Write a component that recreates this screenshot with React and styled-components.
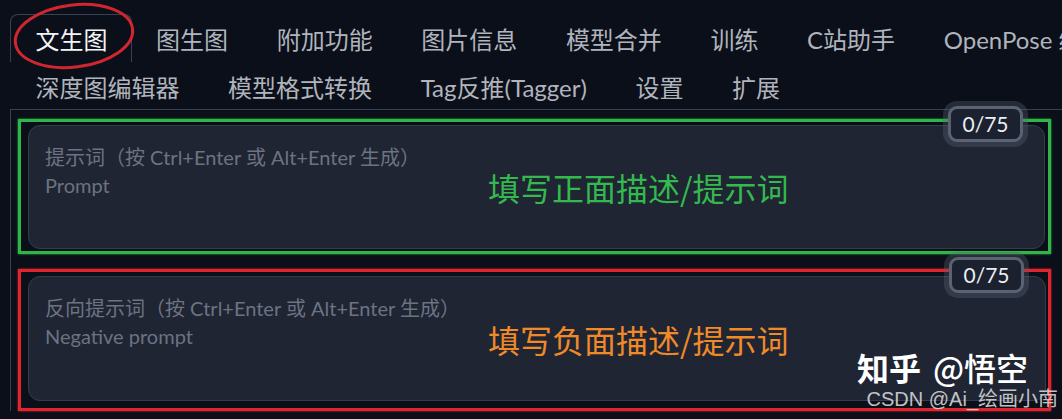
import React from 'react'
import styled, { createGlobalStyle } from 'styled-components'

const GlobalStyle = createGlobalStyle`
  html, body {
    margin: 0;
    padding: 0;
    background: #0b0f19;
    overflow: hidden;
  }
  body {
    font-family: Lato, "Noto Sans CJK SC", sans-serif;
  }
`;

const Page = styled.div`
  position: relative;
  width: 1062px;
  height: 419px;
  padding: 14px 0 0 10px;
  box-sizing: border-box;
  overflow: hidden;
`;

const TabRow = styled.div`
  display: flex;
  flex-wrap: nowrap;
  height: 48px;
  white-space: nowrap;
`;

const Tab = styled.div`
  display: flex;
  align-items: center;
  height: 100%;
  padding: 0 23.3px;
  box-sizing: border-box;
  font-size: 24px;
  color: ${p => (p.$active ? '#f3f4f6' : '#b0b4bc')};
  border: 1px solid ${p => (p.$active ? '#374151' : 'transparent')};
  border-bottom: none;
  border-radius: 8px 8px 0 0;
  flex-shrink: 0;
  &:first-child { padding-left: 24.5px; }
`;

const Panel = styled.div`
  border-top: 1px solid #374151;
  border-left: 1px solid #374151;
  margin-top: -1px;
  padding: 9px 0 0 7px;
  display: flex;
  flex-direction: column;
  gap: 15px;
`;

const Frame = styled.div`
  width: 1033px;
  box-sizing: border-box;
  border: 3px solid ${p => p.$color};
  padding: ${p => p.$pad};
  box-shadow: 0 0 2px ${p => p.$color};
`;

const TextBox = styled.div`
  position: relative;
  height: ${p => p.$h}px;
  box-sizing: border-box;
  background: #1f2533;
  border: 1px solid #343c4b;
  border-radius: 12px;
  padding: 17px 16px;
  font-size: 20px;
  line-height: 28px;
  color: #6c7382;
`;

const Counter = styled.div`
  position: absolute;
  top: -20px;
  right: 21px;
  width: 75px;
  height: 36px;
  box-sizing: border-box;
  border: 3px solid #5b6271;
  border-radius: 9px;
  background: #1b212e;
  box-shadow: 0 0 0 5px rgba(90, 98, 114, 0.35);
  display: flex;
  align-items: center;
  justify-content: center;
  font-size: 21px;
  color: #eceef2;
`;

const Note = styled.div`
  position: absolute;
  left: 459px;
  top: 50%;
  transform: translateY(-50%);
  font-size: 32px;
  font-family: "Noto Sans CJK SC", Lato, sans-serif;
  color: ${p => p.$color};
  white-space: nowrap;
`;

const Ring = styled.svg`
  position: absolute;
  left: 0;
  top: 0;
  pointer-events: none;
`;

const Mark = styled.div`
  position: absolute;
  right: 4px;
  bottom: 8px;
  display: flex;
  flex-direction: column;
  align-items: flex-end;
  pointer-events: none;
`;

const MarkMain = styled.div`
  font-family: "Noto Sans CJK SC", sans-serif;
  font-size: 32px;
  color: #ffffff;
  line-height: 40px;
  margin-right: 30px;
  b { font-weight: 700; }
  span { font-weight: 500; margin-left: 12px; }
`;

const MarkSub = styled.div`
  font-family: "Liberation Sans", "Noto Sans CJK SC", sans-serif;
  font-size: 20px;
  line-height: 24px;
  color: rgba(225, 225, 225, 0.85);
`;

const row1 = ['文生图', '图生图', '附加功能', '图片信息', '模型合并', '训练', 'C站助手', 'OpenPose 编辑器'];
const row2 = ['深度图编辑器', '模型格式转换', 'Tag反推(Tagger)', '设置', '扩展'];

const Prompt = ({ color, pad, h, lines, note, noteColor }) => (
  <Frame $color={color} $pad={pad}>
    <TextBox $h={h}>
      {lines.map(l => <div key={l}>{l}</div>)}
      <Counter>0/75</Counter>
      <Note $color={noteColor}>{note}</Note>
    </TextBox>
  </Frame>
);

export default function App() {
  return (
    <Page>
      <GlobalStyle />
      <TabRow>
        {row1.map((t, i) => <Tab key={t} $active={i === 0}>{t}</Tab>)}
      </TabRow>
      <TabRow>
        {row2.map(t => <Tab key={t}>{t}</Tab>)}
      </TabRow>
      <Panel>
        <Prompt
          color="#2fb548"
          pad="3px 3px 2px 7px"
          h={124}
          lines={['提示词（按 Ctrl+Enter 或 Alt+Enter 生成）', 'Prompt']}
          note="填写正面描述/提示词"
          noteColor="#34b94e"
        />
        <Prompt
          color="#e0252c"
          pad="4px 2px 7px 7px"
          h={125}
          lines={['反向提示词（按 Ctrl+Enter 或 Alt+Enter 生成）', 'Negative prompt']}
          note="填写负面描述/提示词"
          noteColor="#f08a28"
        />
      </Panel>
      <Ring width="150" height="80" viewBox="0 0 150 80">
        <ellipse cx="74" cy="36" rx="59" ry="31" fill="none" stroke="#cf2630" strokeWidth="3" transform="rotate(-7 74 36)" />
      </Ring>
      <Mark>
        <MarkMain><b>知乎</b><span>@悟空</span></MarkMain>
        <MarkSub>CSDN @Ai_绘画小南</MarkSub>
      </Mark>
    </Page>
  )
}
